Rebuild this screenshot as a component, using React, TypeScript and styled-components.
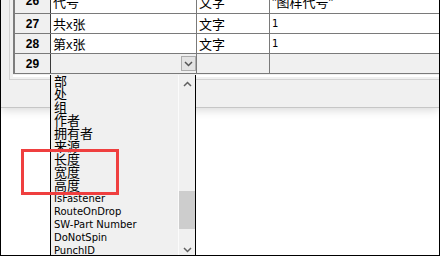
import styled, { createGlobalStyle } from "styled-components";

const Global = createGlobalStyle`
  html, body { margin: 0; padding: 0; background: #fff; }
  body { font-family: "Liberation Sans", "Noto Sans CJK SC", sans-serif; color: #000; }
`;

const latinFont = `"DejaVu Sans", "Noto Sans CJK SC", sans-serif`;

const Screen = styled.div`
  position: relative;
  width: 440px;
  height: 256px;
  box-sizing: border-box;
  border: 1px solid #000;
  border-top: none;
  background: #fff;
  overflow: hidden;
`;

const Panel = styled.div`
  height: 118px;
  background: #f0f0f0;
  box-shadow: 0 1px 0 #c6c6c6, 0 3px 9px rgba(0, 0, 0, 0.16);
`;

const Frame = styled.div`
  margin-left: 8px;
  padding-left: 3px;
  border-left: 1px solid #d2d2d2;
  border-bottom: 1px solid #d2d2d2;
`;

const Grid = styled.div`
  margin-top: -11px;
  border-left: 2px solid #7d7d7d;
`;

const Row = styled.div<{ $h?: number }>`
  display: grid;
  grid-template-columns: 36px 146px 73px 1fr;
  height: ${(p) => p.$h ?? 20}px;
  box-sizing: border-box;
  border-bottom: 1px solid #7a7a7a;
`;

const HeadCell = styled.div`
  display: flex;
  align-items: center;
  justify-content: center;
  background: #f0f0f0;
  border-right: 1px solid #3a3a3a;
  font-size: 12px;
  font-weight: bold;
`;

const Cell = styled.div<{ $blank?: boolean; $latin?: boolean; $last?: boolean }>`
  display: flex;
  align-items: center;
  padding-left: 2px;
  background: ${(p) => (p.$blank ? "#f0f0f0" : "#fff")};
  border-right: ${(p) => (p.$last ? "none" : "1px solid #7a7a7a")};
  font-family: ${(p) => (p.$latin ? latinFont : "inherit")};
  font-size: ${(p) => (p.$latin ? 10 : 13)}px;
  white-space: nowrap;
  overflow: hidden;
`;

const ComboCell = styled(Cell)`
  justify-content: flex-end;
  padding-left: 0;
`;

const ComboBtn = styled.div`
  width: 15px;
  height: 15px;
  box-sizing: border-box;
  display: flex;
  align-items: center;
  justify-content: center;
  background: #e3e3e3;
  border: 1px solid #adadad;
`;

const Gutter = styled.div`
  height: 5px;
  background: linear-gradient(#f0f0f0 0 1px, #fff 1px 3px, #f0f0f0 3px);
`;

const DropList = styled.div`
  position: absolute;
  left: 49px;
  top: 75px;
  width: 146px;
  height: 183px;
  box-sizing: border-box;
  display: flex;
  background: #f0f0f0;
  border-left: 1px solid #000;
  border-right: 1px solid #000;
`;

const Items = styled.div`
  flex: 1;
  padding-left: 3px;
  overflow: hidden;
`;

const Item = styled.div<{ $cjk?: boolean }>`
  height: 13px;
  line-height: 13px;
  font-family: ${(p) => (p.$cjk ? "inherit" : latinFont)};
  font-size: ${(p) => (p.$cjk ? 13 : 10)}px;
  white-space: nowrap;
`;

const Scrollbar = styled.div`
  width: 17px;
  box-sizing: border-box;
  display: flex;
  flex-direction: column;
  background: #f0f0f0;
  border-left: 1px solid #fbfbfb;
`;

const ScrollBtn = styled.div`
  height: 17px;
  display: flex;
  align-items: center;
  justify-content: center;
`;

const Track = styled.div`
  flex: 1;
`;

const Thumb = styled.div`
  margin-top: 99px;
  height: 38px;
  background: #cdcdcd;
`;

const Highlight = styled.div`
  position: absolute;
  left: 20px;
  top: 149px;
  width: 98px;
  height: 46px;
  box-sizing: border-box;
  border: 3px solid #ef3f3f;
`;

const Chevron = ({ up, color = "#606060" }: { up?: boolean; color?: string }) => (
  <svg width="9" height="6" viewBox="0 0 9 6">
    <polyline
      points={up ? "1,5 4.5,1.5 8,5" : "1,1 4.5,4.5 8,1"}
      fill="none"
      stroke={color}
      strokeWidth="1.5"
    />
  </svg>
);

const rows = [
  { n: 26, name: "代号", type: "文字", value: "\"图样代号\"" },
  { n: 27, name: "共x张", type: "文字", value: "1" },
  { n: 28, name: "第x张", type: "文字", value: "1" },
];

const options = [
  "部", "处", "组", "作者", "拥有者", "来源", "长度", "宽度", "高度",
  "IsFastener", "RouteOnDrop", "SW-Part Number", "DoNotSpin", "PunchID",
];

const isCjk = (s: string) => /[\u4e00-\u9fff]/.test(s);

export default function App() {
  return (
    <>
      <Global />
      <Screen>
        <Panel>
          <Frame>
            <Grid>
              {rows.map((r, i) => (
                <Row key={r.n} $h={i === 0 ? 25 : 20}>
                  <HeadCell>{r.n}</HeadCell>
                  <Cell $latin={!isCjk(r.name)}>{r.name}</Cell>
                  <Cell>{r.type}</Cell>
                  <Cell $last $latin={!isCjk(r.value)}>{r.value}</Cell>
                </Row>
              ))}
              <Row>
                <HeadCell>29</HeadCell>
                <ComboCell $blank>
                  <ComboBtn>
                    <Chevron color="#555" />
                  </ComboBtn>
                </ComboCell>
                <Cell $blank />
                <Cell $blank $last />
              </Row>
            </Grid>
            <Gutter />
          </Frame>
        </Panel>

        <DropList>
          <Items>
            {options.map((o) => (
              <Item key={o} $cjk={isCjk(o)}>{o}</Item>
            ))}
          </Items>
          <Scrollbar>
            <ScrollBtn><Chevron up /></ScrollBtn>
            <Track><Thumb /></Track>
            <ScrollBtn><Chevron /></ScrollBtn>
          </Scrollbar>
        </DropList>

        <Highlight />
      </Screen>
    </>
  );
}
